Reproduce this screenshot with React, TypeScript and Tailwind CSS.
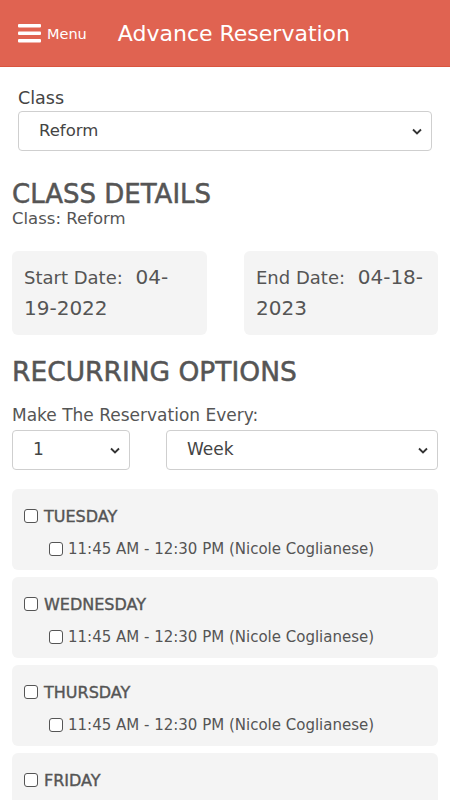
const font = { fontFamily: '"DejaVu Sans", "Open Sans", sans-serif' };

function Select({ value, className }: { value: string; className: string }) {
  return (
    <div className={`flex items-center justify-between rounded border border-[#cfcfcf] bg-white text-[#444] ${className}`}>
      <span>{value}</span>
      <svg width="10" height="7" viewBox="0 0 10 7" className="mr-[-1px]">
        <path d="M1 1.5 L5 5.5 L9 1.5" stroke="#333" strokeWidth="1.8" fill="none" />
      </svg>
    </div>
  );
}

function Box() {
  return <span className="inline-block h-[14px] w-[14px] shrink-0 rounded-[3px] border border-[#555] bg-white" />;
}

const days = ['TUESDAY', 'WEDNESDAY', 'THURSDAY', 'FRIDAY'];

export default function App() {
  return (
    <div className="min-h-[800px] w-[450px] overflow-hidden bg-white text-[#555]" style={font}>
      <header className="flex h-[67px] items-center border-b border-[#d9553f] bg-[#e06351] text-white">
        <div className="ml-[18px] flex items-center">
          <svg width="24" height="20" viewBox="0 0 24 20">
            <rect x="0" y="1" width="23" height="3.5" rx="1" fill="white" />
            <rect x="0" y="8.5" width="23" height="3.5" rx="1" fill="white" />
            <rect x="0" y="16" width="23" height="3.5" rx="1" fill="white" />
          </svg>
          <span className="ml-[5px] mt-[3px] text-[14.5px]">Menu</span>
        </div>
        <h1 className="ml-[31px] text-[22px]">Advance Reservation</h1>
      </header>

      <div className="px-[18px] pt-[20px]">
        <div className="text-[17.5px] leading-[22px] text-[#444]">Class</div>
        <Select value="Reform" className="mt-[2px] h-[40px] pl-[20px] pr-[10px] text-[16.5px]" />
      </div>

      <div className="px-[12px]">
        <h2 className="mt-[28px] text-[26px] leading-[30px] text-[#555] [-webkit-text-stroke:0.5px_#555]">CLASS DETAILS</h2>
        <div className="text-[16.5px] leading-[20px]">Class: Reform</div>

        <div className="mt-[22px] flex justify-between">
          <div className="h-[84px] w-[195px] rounded-md bg-[#f4f4f4] px-[12px] pt-[11px] text-[20px] leading-[30px]">
            <span className="text-[18px]">Start Date:</span>&nbsp; 04-<br />19-2022
          </div>
          <div className="h-[84px] w-[194px] rounded-md bg-[#f4f4f4] px-[12px] pt-[11px] text-[20px] leading-[30px]">
            <span className="text-[18px]">End Date:</span>&nbsp; 04-18-<br />2023
          </div>
        </div>

        <h2 className="mt-[22px] text-[26.5px] leading-[30px] text-[#555] [-webkit-text-stroke:0.5px_#555]">RECURRING OPTIONS</h2>
        <div className="mt-[17px] text-[17px] leading-[22px]">Make The Reservation Every:</div>
        <div className="mt-[4px] flex justify-between">
          <Select value="1" className="h-[40px] w-[118px] pl-[20px] pr-[10px] text-[17px]" />
          <Select value="Week" className="h-[40px] w-[272px] pl-[20px] pr-[10px] text-[17px]" />
        </div>

        <div className="mt-[19px] flex flex-col gap-[7px]">
          {days.map((d) => (
            <div key={d} className="h-[81px] rounded-md bg-[#f4f4f4] pl-[12px] pt-[15px]">
              <div className="flex items-center gap-[6px] text-[16px] leading-[20px] text-[#555]">
                <Box />
                <span className="mt-[3px] [-webkit-text-stroke:0.4px_#555]">{d}</span>
              </div>
              <div className={`mt-[12px] ml-[25px] flex items-center gap-[5px] text-[15px] leading-[20px] ${d === 'FRIDAY' ? 'invisible' : ''}`}>
                <Box />
                <span>11:45 AM - 12:30 PM (Nicole Coglianese)</span>
              </div>
            </div>
          ))}
        </div>
      </div>
    </div>
  );
}
